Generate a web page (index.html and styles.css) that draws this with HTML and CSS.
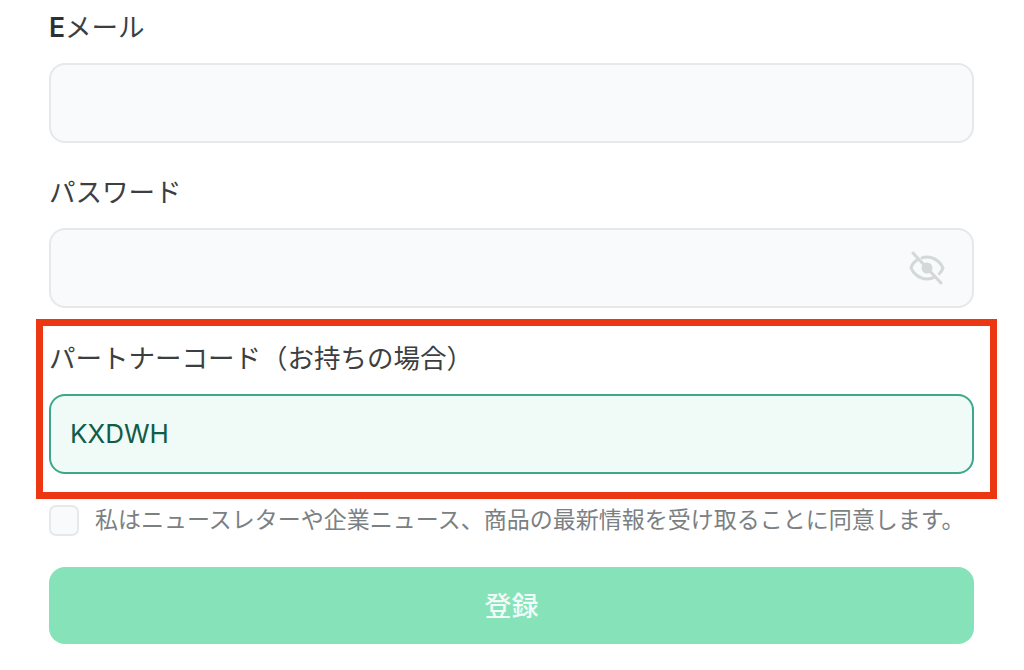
FILE: index.html
```html
<!DOCTYPE html>
<html lang="ja">
<head>
    <meta charset="UTF-8">
    <meta name="viewport" content="width=device-width, initial-scale=1.0">
    <title>登録</title>
    <link rel="stylesheet" href="styles.css">
</head>
<body>

<form class="container">
    <div class="input-group">
        <label for="email"><span class="latin">E</span>メール</label>
        <div class="field"></div>
    </div>
    <div class="input-group">
        <label for="password">パスワード</label>
        <div class="field field-password">
            <svg class="eye" viewBox="0 0 36 36" width="36" height="36" fill="none" stroke="#d3d8d9" stroke-width="3" stroke-linecap="round" stroke-linejoin="round">
                <path d="M8 10C4.500 12.500 2.500 15.500 2 18c2 5.500 8.500 11 16 11 3 0 5.500-.7 7.700-2"/>
                <path d="M13 7.800C14.500 7.300 16.200 7 18 7c7.500 0 14 5.500 16 11-.7 2-2 4-3.700 5.700"/>
                <circle cx="18" cy="18" r="5.500" fill="#d3d8d9" stroke="none"/>
                <path d="M4 3l28 30"/>
            </svg>
        </div>
    </div>
    <div class="highlight">
        <label for="partner">パートナーコード（お持ちの場合）</label>
        <div class="field field-filled">KXDWH</div>
    </div>
    <div class="check-row">
        <span class="checkbox"></span>
        <span class="check-text">私はニュースレターや企業ニュース、商品の最新情報を受け取ることに同意します。</span>
    </div>
    <button type="button" class="submit">登録</button>
</form>

</body>
</html>
```

FILE: styles.css
```css
html, body {
    margin: 0;
    height: 670px;
    overflow: hidden;
    background: #fff;
}
body {
    font-family: "Inter", "Noto Sans CJK JP", sans-serif;
}
.container {
    width: 925px;
    margin-left: 49px;
    padding-top: 10px;
}
.input-group {
    margin-bottom: 32px;
}
.input-group:nth-child(2) {
    margin-bottom: 11px;
}
label {
    display: block;
    height: 36px;
    line-height: 34px;
    margin-bottom: 17px;
    font-size: 26.500px;
    color: #3b3f42;
    white-space: nowrap;
}
.latin {
    font-weight: 600;
    color: #2c3033;
}
.field {
    box-sizing: border-box;
    height: 80px;
    border: 2px solid #e6e8ea;
    border-radius: 16px;
    background: #f8fafb;
}
.field-password {
    display: flex;
    align-items: center;
    justify-content: flex-end;
    padding-right: 27px;
}
.eye {
    display: block;
}
.highlight {
    margin: 0 -23px 0 -13px;
    padding: 15px 16px 18px 6px;
    border: 7px solid #ec3712;
}
.field-filled {
    display: flex;
    align-items: center;
    padding: 0 0 2px 19px;
    border-color: #3fa68a;
    background: #f0faf7;
    font-size: 26px;
    color: #0f5c49;
}
.check-row {
    display: flex;
    align-items: center;
    gap: 16px;
    height: 31px;
    margin-top: 6px;
}
.checkbox {
    box-sizing: border-box;
    width: 30px;
    height: 31px;
    border: 2px solid #e6e8ea;
    border-radius: 7px;
    background: #f8fafb;
}
.check-text {
    font-size: 23px;
    line-height: 31px;
    color: #7b8083;
    white-space: nowrap;
}
.submit {
    display: block;
    width: 100%;
    height: 77px;
    margin-top: 31px;
    padding: 0 0 3px;
    border: none;
    border-radius: 16px;
    background: #86e2b9;
    color: #f2fbf7;
    font-family: inherit;
    font-size: 27px;
    font-weight: 500;
}
```
